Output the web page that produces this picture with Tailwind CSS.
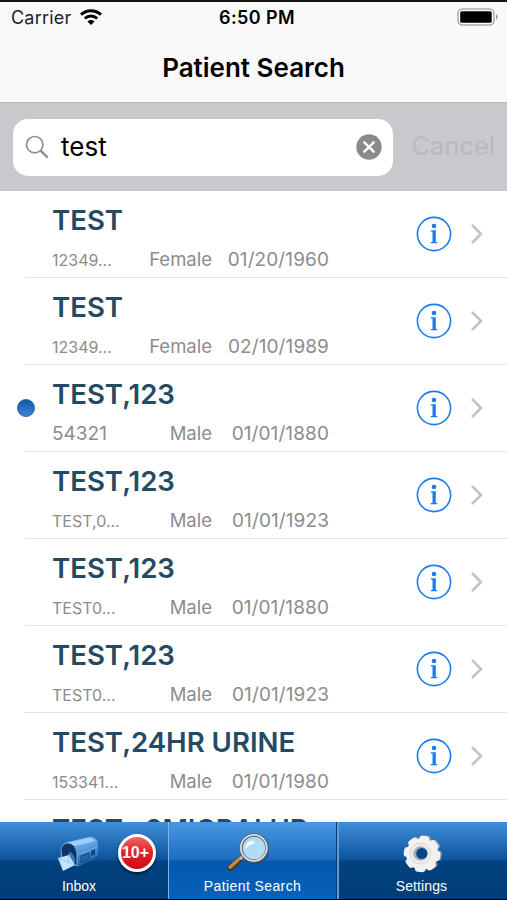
<!DOCTYPE html>
<html lang="en">
<head>
    <meta charset="UTF-8">
    <meta name="viewport" content="width=device-width, initial-scale=1.0">
    <title>Patient Search</title>
    <script src="https://cdn.jsdelivr.net/npm/@tailwindcss/browser@4"></script>
</head>
<body class="bg-white font-['Inter',sans-serif]">
    <div class="w-[507px] h-[900px] flex flex-col overflow-hidden">
        <header class="h-[103px] shrink-0 bg-[#f9f9f9] border-t-2 border-t-[#151515] border-b border-b-[#b9b9bc]">
            <div class="h-8 grid grid-cols-[1fr_auto_1fr] items-center pl-[11px] pr-2 text-[18px] leading-8">
                <div class="flex items-center gap-[9px]">
                    <span class="tracking-[0.2px] text-[#222]">Carrier</span>
                    <svg class="w-[22px] h-4 -mt-0.5" viewBox="0 0 22 16" fill="none" stroke="#000" stroke-width="3">
                        <path d="M1 5.7C6.8.4 15.2.4 21 5.7"/>
                        <path d="M4.8 9.5c3.6-3.3 8.8-3.3 12.4 0"/>
                        <path d="M11 16l-3.5-3.6c2-1.8 5-1.8 7 0z" fill="#000" stroke="none"/>
                    </svg>
                </div>
                <span class="font-semibold text-[18px] tracking-[0.4px] pl-1">6:50 PM</span>
                <svg class="w-[42px] h-[18px] justify-self-end -mt-0.5" viewBox="0 0 42 18">
                    <rect x="1" y="1" width="36" height="16" rx="4.5" fill="#fff" stroke="#aaa" stroke-width="1.5"/>
                    <rect x="3.2" y="3.3" width="31.5" height="11.4" rx="1.5"/>
                    <path d="M39 6.5c2.2.5 2.2 4.5 0 5z" fill="#999"/>
                </svg>
            </div>
            <h1 class="text-center text-[26px] leading-[68px] font-semibold">Patient Search</h1>
        </header>

        <div class="h-[88px] shrink-0 bg-[#c9c8cd] flex items-center pl-[13px] pr-3">
            <div class="w-[380px] h-[57px] bg-white rounded-[15px] flex items-center pl-3 pr-[11px]">
                <svg class="w-6 h-6" viewBox="0 0 24 24" fill="none" stroke="#8e8e93">
                    <circle cx="9.7" cy="9.7" r="8.2" stroke-width="1.7"/>
                    <path d="M15.6 15.6L22.7 22.7" stroke-width="2.4"/>
                </svg>
                <span class="ml-3 grow text-[26px] leading-8">test</span>
                <svg class="w-[26px] h-[26px]" viewBox="0 0 26 26">
                    <circle cx="13" cy="13" r="12.7" fill="#8b8b8d"/>
                    <path d="M8.3 8.3l9.4 9.4M17.7 8.3l-9.4 9.4" stroke="#fff" stroke-width="2.4" stroke-linecap="round"/>
                </svg>
            </div>
            <span class="ml-auto text-[25.5px] leading-8 -mt-0.5 text-[#b9b9be]">Cancel</span>
        </div>

        <div id="patient-list" class="h-[631px] shrink-0 overflow-hidden"></div>

        <nav class="h-[78px] shrink-0 flex border-b border-black font-['Liberation_Sans',sans-serif] text-[14px] leading-4 text-white">
            <div class="w-[168px] flex flex-col items-center pr-[10px] pt-[10px] bg-[linear-gradient(180deg,#3f8fd9_0%,#0c539b_49%,#02427f_51%,#003d78_100%)]">
                <div class="relative">
                    <svg class="w-11 h-11" viewBox="0 0 44 44">
                        <defs>
                            <linearGradient id="box" x1="0.3" y1="0" x2="0.7" y2="1">
                                <stop offset="0" stop-color="#8fc6f5"/>
                                <stop offset="0.4" stop-color="#5ba3e6"/>
                                <stop offset="1" stop-color="#174f93"/>
                            </linearGradient>
                        </defs>
                        <path d="M5 15c1-3 3-4 6-5L32 5c5-1 9 3 9 8v11L21 35l-9-5z" fill="url(#box)"/>
                        <path d="M4 19c0-5 3-8 7-8 5 0 9 5 9 12v11L5 26z" fill="#0d3560" stroke="#6fade6" stroke-width="1"/>
                        <path d="M12 20c3 0 6 4 6 9v3l-8-4z" fill="#3676b8"/>
                        <path d="M11 11l21-5c3 0 5 1 6 3L17 14c-2-2-4-3-6-3z" fill="#c4e3fc" opacity="0.6"/>
                        <path d="M20 23l20-8" stroke="#8ac0f0" stroke-width="1" opacity="0.6"/>
                        <path d="M24 24l8-3v6l-8 4z" fill="#2464a8" stroke="#164781"/>
                        <path d="M34 19l4-2v5l-4 2z" fill="#0f4582"/>
                        <path d="M1 26l11-3 6 10-12 6z" fill="#c3e4ff"/>
                        <path d="M1 26l10 4 1-7M11 30l7 3" fill="none" stroke="#86bfee" stroke-width="0.8"/>
                    </svg>
                    <div class="absolute left-[61px] top-[2px] w-[38px] h-[38px] rounded-full border-[3px] border-white bg-[linear-gradient(180deg,#ef6868_0%,#e32329_45%,#cc0c14_100%)] shadow-[0_2px_3px_rgba(0,0,0,0.6)] text-[16px] font-bold leading-8 text-center -indent-[3px]">10+</div>
                </div>
                <span class="mt-[2px]">Inbox</span>
            </div>
            <div class="w-[169px] flex flex-col items-center pt-[10px] border-x border-l-[#7fb5e6] border-r-[#0a3a70] bg-[linear-gradient(180deg,#4998e3_0%,#1c6dc2_49%,#0459ae_51%,#0861b8_100%)]">
                <svg class="w-11 h-11 mr-3" viewBox="0 0 44 44">
                    <defs>
                        <linearGradient id="lens" x1="0" y1="0" x2="1" y2="1">
                            <stop offset="0" stop-color="#a3d8f1"/>
                            <stop offset="1" stop-color="#b9e1f3"/>
                        </linearGradient>
                    </defs>
                    <path d="M5.5 36L14 28" stroke="#543719" stroke-width="6" stroke-linecap="round"/>
                    <path d="M5 35.2L14 27" stroke="#c58a4e" stroke-width="3.2" stroke-linecap="round"/>
                    <path d="M15 27l4-4" stroke="#bfc5c9" stroke-width="3"/>
                    <circle cx="30" cy="17.5" r="13" fill="none" stroke="#1b436e" stroke-width="4" opacity="0.5"/>
                    <circle cx="29" cy="16" r="13" fill="url(#lens)" stroke="#555e64" stroke-width="3.4"/>
                    <circle cx="28.8" cy="15.8" r="13" fill="none" stroke="#d9dddf" stroke-width="1.8"/>
                    <path d="M20 17c0-5 3-8 8-8.5l2 3c-4 0-7 3-10 5.5z" fill="#fff" opacity="0.85"/>
                </svg>
                <span class="mt-[2px] tracking-[0.4px]">Patient Search</span>
            </div>
            <div class="grow flex flex-col items-center pr-[3px] pt-[10px] border-l-2 border-[#5c9bd4] bg-[linear-gradient(180deg,#3f8fd9_0%,#0c539b_49%,#02427f_51%,#003d78_100%)]">
                <svg class="w-11 h-11" viewBox="0 0 44 44">
                    <defs>
                        <g id="gear">
                            <circle cx="22" cy="22" r="15.8"/>
                            <rect x="17" y="3.8" width="10" height="36.4" rx="3"/>
                            <rect x="17" y="3.8" width="10" height="36.4" rx="3" transform="rotate(45 22 22)"/>
                            <rect x="17" y="3.8" width="10" height="36.4" rx="3" transform="rotate(90 22 22)"/>
                            <rect x="17" y="3.8" width="10" height="36.4" rx="3" transform="rotate(135 22 22)"/>
                        </g>
                    </defs>
                    <use href="#gear" fill="#9b9ea0" transform="translate(1.5 -0.5) rotate(8 22 22)"/>
                    <use href="#gear" fill="#f2f2f2" transform="rotate(8 22 22)"/>
                    <circle cx="20.5" cy="21.5" r="10.5" fill="#ececed" stroke="#dadbdc"/>
                    <circle cx="20.5" cy="21.5" r="7.2" fill="#a9adb0"/>
                    <circle cx="21.8" cy="21.5" r="5.6" fill="#07458a"/>
                </svg>
                <span class="mt-[2px] tracking-[0.1px]">Settings</span>
            </div>
        </nav>
    </div>

    <script>
        const patients = [
            { name: 'TEST', id: '12349...', sex: 'Female', dob: '01/20/1960' },
            { name: 'TEST', id: '12349...', sex: 'Female', dob: '02/10/1989' },
            { name: 'TEST,123', id: '54321', sex: 'Male', dob: '01/01/1880', unread: true },
            { name: 'TEST,123', id: 'TEST,0...', sex: 'Male', dob: '01/01/1923' },
            { name: 'TEST,123', id: 'TEST0...', sex: 'Male', dob: '01/01/1880' },
            { name: 'TEST,123', id: 'TEST0...', sex: 'Male', dob: '01/01/1923' },
            { name: 'TEST,24HR URINE', id: '153341...', sex: 'Male', dob: '01/01/1980' },
            { name: 'TEST , 2MICRALUR', id: '', sex: '', dob: '' }
        ];

        document.getElementById('patient-list').innerHTML = patients.map((p) => `
            <div class="h-[87px] flex">
                <div class="w-[25px] flex items-center justify-end">
                    ${p.unread ? '<div class="w-[18px] h-[18px] -mr-[10px] -mt-px shrink-0 rounded-full border border-[#2b63a5] bg-linear-to-b from-[#0d57ad] to-[#3c86d6]"></div>' : ''}
                </div>
                <div class="grow flex items-center border-b border-[#e3e3e5] pl-[27px]">
                    <div class="w-[277px] h-full pt-3">
                        <div class="text-[27.6px] leading-[34px] font-semibold text-[#254a63] whitespace-nowrap">${p.name}</div>
                        <div class="mt-[10px] flex items-baseline leading-6 text-[#8c8c8c]">
                            <span class="w-[90px] ${p.id.endsWith('...') ? 'text-[16px]' : 'text-[19px]'}">${p.id}</span>
                            <span class="w-[70px] text-right text-[18.5px]">${p.sex}</span>
                            <span class="ml-auto text-[19px] tracking-[0.1px]">${p.dob}</span>
                        </div>
                    </div>
                    <svg class="ml-[87px] w-9 h-9 shrink-0" viewBox="0 0 36 36" fill="#1a7cf0">
                        <circle cx="18" cy="18" r="16.6" fill="none" stroke="#1a7cf0" stroke-width="1.6"/>
                        <circle cx="18" cy="10" r="2.3"/>
                        <path d="M14.8 14.3h5v11.7h1.5v1.2h-6.5v-1.2h1.7V15.5h-1.7z"/>
                    </svg>
                    <svg class="ml-[18px] w-[14px] h-[22px] shrink-0" viewBox="0 0 14 22" fill="none" stroke="#c3c3c7" stroke-width="2.6">
                        <path d="M2 2l9 9-9 9"/>
                    </svg>
                </div>
            </div>`).join('');
    </script>
</body>
</html>
